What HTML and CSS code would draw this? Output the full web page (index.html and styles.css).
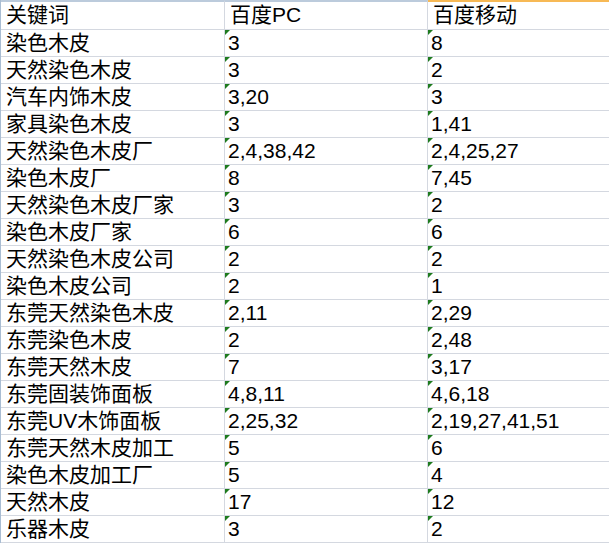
FILE: index.html
```html
<!DOCTYPE html>
<html lang="zh">
<head>
<meta charset="utf-8">
<link rel="stylesheet" href="styles.css">
</head>
<body>
<div class="sheet">
  <div class="row head">
    <div class="cell a">关键词</div>
    <div class="cell b">百度PC</div>
    <div class="cell c sel">百度移动</div>
  </div>
  <div class="row"><div class="cell a">染色木皮</div><div class="cell b t">3</div><div class="cell c t">8</div></div>
  <div class="row"><div class="cell a">天然染色木皮</div><div class="cell b t">3</div><div class="cell c t">2</div></div>
  <div class="row"><div class="cell a">汽车内饰木皮</div><div class="cell b t">3,20</div><div class="cell c t">3</div></div>
  <div class="row"><div class="cell a">家具染色木皮</div><div class="cell b t">3</div><div class="cell c t">1,41</div></div>
  <div class="row"><div class="cell a">天然染色木皮厂</div><div class="cell b t">2,4,38,42</div><div class="cell c t">2,4,25,27</div></div>
  <div class="row"><div class="cell a">染色木皮厂</div><div class="cell b t">8</div><div class="cell c t">7,45</div></div>
  <div class="row"><div class="cell a">天然染色木皮厂家</div><div class="cell b t">3</div><div class="cell c t">2</div></div>
  <div class="row"><div class="cell a">染色木皮厂家</div><div class="cell b t">6</div><div class="cell c t">6</div></div>
  <div class="row"><div class="cell a">天然染色木皮公司</div><div class="cell b t">2</div><div class="cell c t">2</div></div>
  <div class="row"><div class="cell a">染色木皮公司</div><div class="cell b t">2</div><div class="cell c t">1</div></div>
  <div class="row"><div class="cell a">东莞天然染色木皮</div><div class="cell b t">2,11</div><div class="cell c t">2,29</div></div>
  <div class="row"><div class="cell a">东莞染色木皮</div><div class="cell b t">2</div><div class="cell c t">2,48</div></div>
  <div class="row"><div class="cell a">东莞天然木皮</div><div class="cell b t">7</div><div class="cell c t">3,17</div></div>
  <div class="row"><div class="cell a">东莞固装饰面板</div><div class="cell b t">4,8,11</div><div class="cell c t">4,6,18</div></div>
  <div class="row"><div class="cell a">东莞UV木饰面板</div><div class="cell b t">2,25,32</div><div class="cell c t">2,19,27,41,51</div></div>
  <div class="row"><div class="cell a">东莞天然木皮加工</div><div class="cell b t">5</div><div class="cell c t">6</div></div>
  <div class="row"><div class="cell a">染色木皮加工厂</div><div class="cell b t">5</div><div class="cell c t">4</div></div>
  <div class="row"><div class="cell a">天然木皮</div><div class="cell b t">17</div><div class="cell c t">12</div></div>
  <div class="row"><div class="cell a">乐器木皮</div><div class="cell b t">3</div><div class="cell c t">2</div></div>
</div>
</body>
</html>
```
FILE: styles.css
```css
html, body {
  margin: 0;
  padding: 0;
  background: #ffffff;
}
body {
  width: 609px;
  height: 544px;
  overflow: hidden;
}
.sheet {
  border-left: 1px solid #a9bdd3;
  font-family: "Liberation Sans", "Noto Sans CJK SC", sans-serif;
  font-size: 21px;
  color: #000000;
}
.row {
  display: grid;
  grid-template-columns: 224px 203px 1fr;
}
.cell {
  position: relative;
  height: 26px;
  line-height: 26px;
  border-bottom: 1px solid #d4d8e0;
  border-right: 1px solid #d4d8e0;
  padding-left: 3px;
  white-space: nowrap;
  overflow: hidden;
}
.cell.c {
  border-right: none;
}
.cell.a {
  padding-left: 5px;
}
.head .cell {
  height: 27px;
  line-height: 26px;
  border-top: 2px solid #bccbdc;
  padding-left: 5px;
}
.head .cell.sel {
  border-top-color: #f7b955;
}
.t::before {
  content: "";
  position: absolute;
  left: 0;
  top: 0;
  width: 0;
  height: 0;
  border-top: 5px solid #1e7b1e;
  border-right: 5px solid transparent;
}
```
